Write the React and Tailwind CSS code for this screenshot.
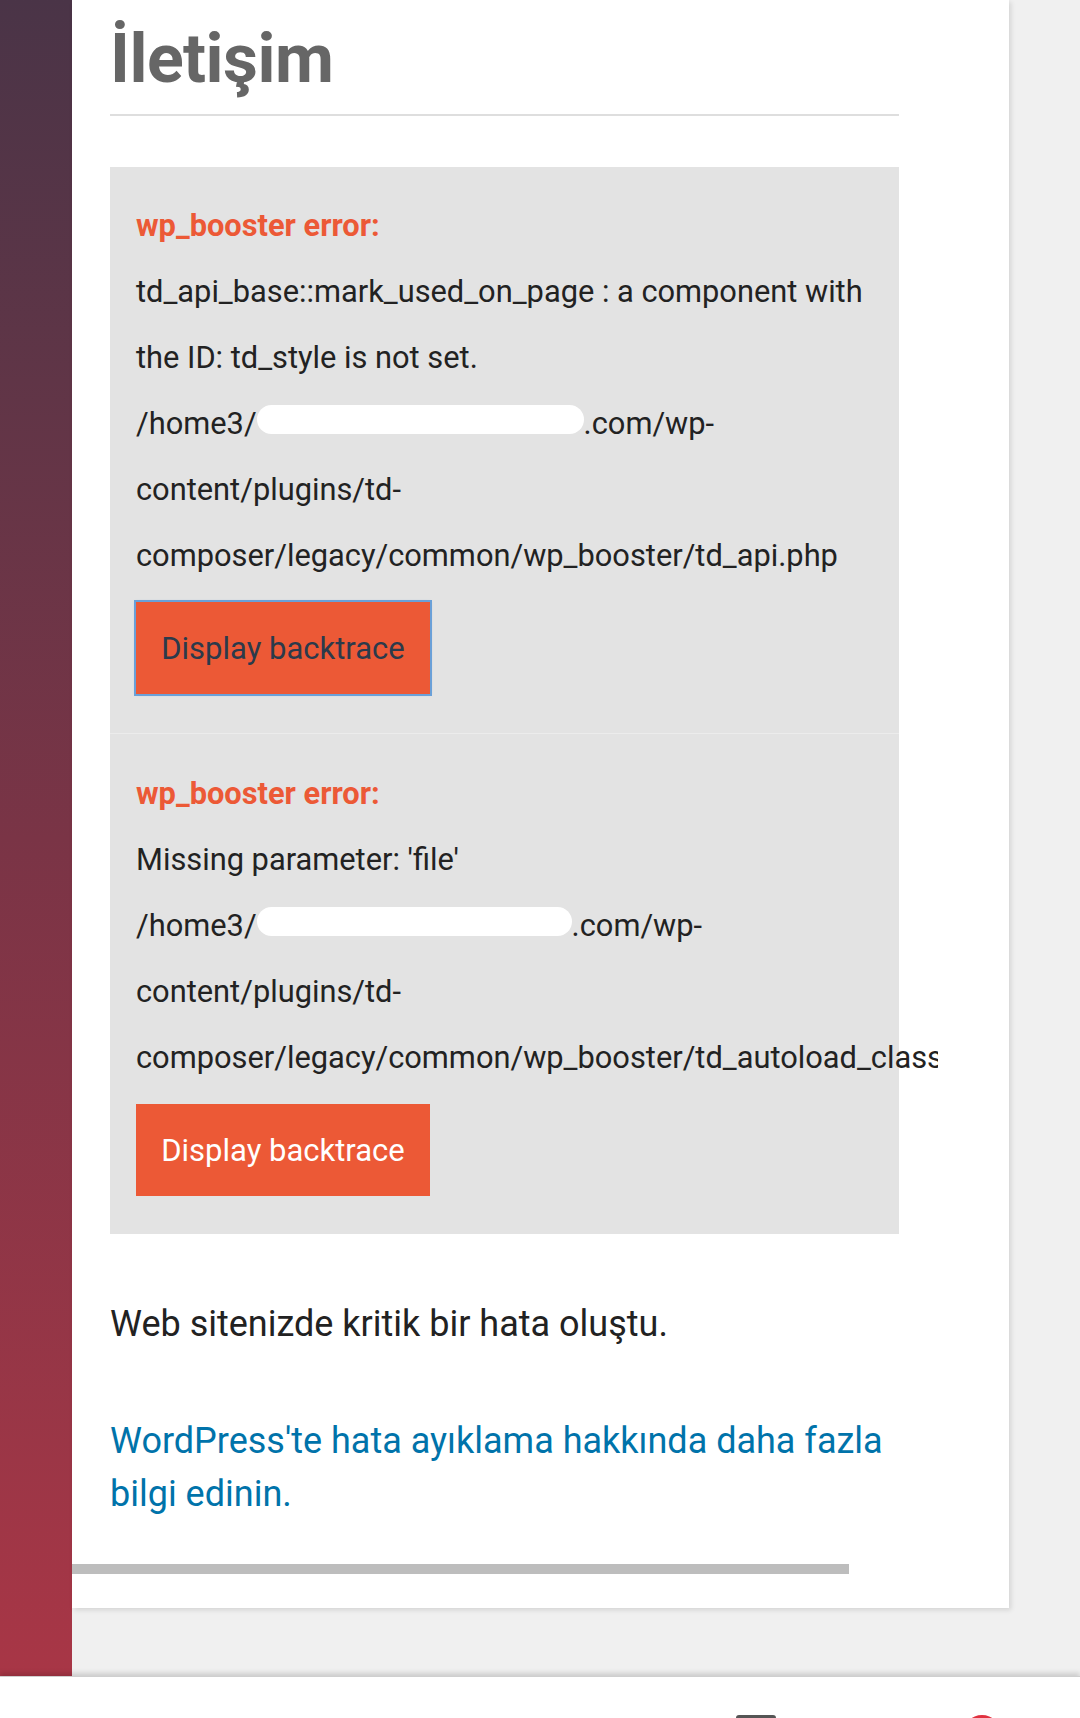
import React from 'react';

const Redacted = ({ width }) => (
  <span className="inline-block h-[29px] rounded-full bg-white" style={{ width }} />
);

const ErrorBlock = ({ lines, focused, divider, pad }) => (
  <div className={`px-[26px] ${pad} ${divider ? 'border-t border-[#ececec]' : ''}`}>
    <div className="text-[#ec5936] font-bold">wp_booster error:</div>
    {lines.map((line, i) => (
      <div key={i} className="whitespace-nowrap text-[#222]">{line}</div>
    ))}
    <button
      className={`mt-[13px] w-[294px] h-[92px] bg-[#ec5936] text-[31px] leading-none ${
        focused ? 'text-[#2b3a4b] outline-2 outline-[#6aa0d8] shadow-[0_0_3px_rgba(90,150,220,0.6)]' : 'text-white'
      }`}
    >
      Display backtrace
    </button>
  </div>
);

export default function App() {
  return (
    <div className="w-[1080px] h-[1718px] overflow-hidden font-['Roboto',sans-serif] bg-white">
      <div className="flex h-[1676px]">
        <div className="w-[72px] shrink-0 bg-linear-to-b from-[#4a3447] via-[#7a3446] to-[#a83646]" />
        <div className="flex-1 bg-[#f0f0f0]">
          <div className="w-[937px] h-[1608px] bg-white shadow-[2px_2px_5px_rgba(0,0,0,0.12)]">
            <div className="w-[866px] overflow-hidden pl-[38px] pt-[19px]">
              <h1 className="text-[68px] leading-[80px] font-bold text-[#666] tracking-[-0.5px]">İletişim</h1>
              <div className="mt-[15px] w-[789px] h-[2px] bg-[#dedede]" />

              <div className="mt-[51px] w-[789px] bg-[#e3e3e3] text-[30.8px] leading-[66px]">
                <ErrorBlock
                  focused
                  pad="pt-[26px] pb-[39px]"
                  lines={[
                    'td_api_base::mark_used_on_page : a component with',
                    'the ID: td_style is not set.',
                    <>/home3/<Redacted width="327px" />.com/wp-</>,
                    'content/plugins/td-',
                    'composer/legacy/common/wp_booster/td_api.php',
                  ]}
                />
                <ErrorBlock
                  divider
                  pad="pt-[27px] pb-[38px]"
                  lines={[
                    "Missing parameter: 'file'",
                    <>/home3/<Redacted width="315px" />.com/wp-</>,
                    'content/plugins/td-',
                    'composer/legacy/common/wp_booster/td_autoload_class',
                  ]}
                />
              </div>

              <p className="mt-[64px] text-[36px] leading-[53px] text-[#222]">Web sitenizde kritik bir hata oluştu.</p>
              <p className="mt-[64px] w-[789px] text-[36px] leading-[53px] text-[#0073aa]">
                <a href="#">WordPress'te hata ayıklama hakkında daha fazla bilgi edinin.</a>
              </p>
            </div>
            <div className="mt-[43px] w-[777px] h-[10px] bg-[#bdbdbd]" />
          </div>
        </div>
      </div>
      <div className="relative h-[42px] bg-white border-t border-[#cfcfcf] shadow-[0_-3px_5px_rgba(0,0,0,0.15)] overflow-hidden">
        <div className="flex items-start pt-[38px]">
          <div className="ml-[736px] w-[40px] h-[20px] rounded-[3px] border-[3px] border-[#555]" />
          <div className="ml-[187px] w-[38px] h-[38px] rounded-full bg-[#e0313f]" />
        </div>
      </div>
    </div>
  );
}
